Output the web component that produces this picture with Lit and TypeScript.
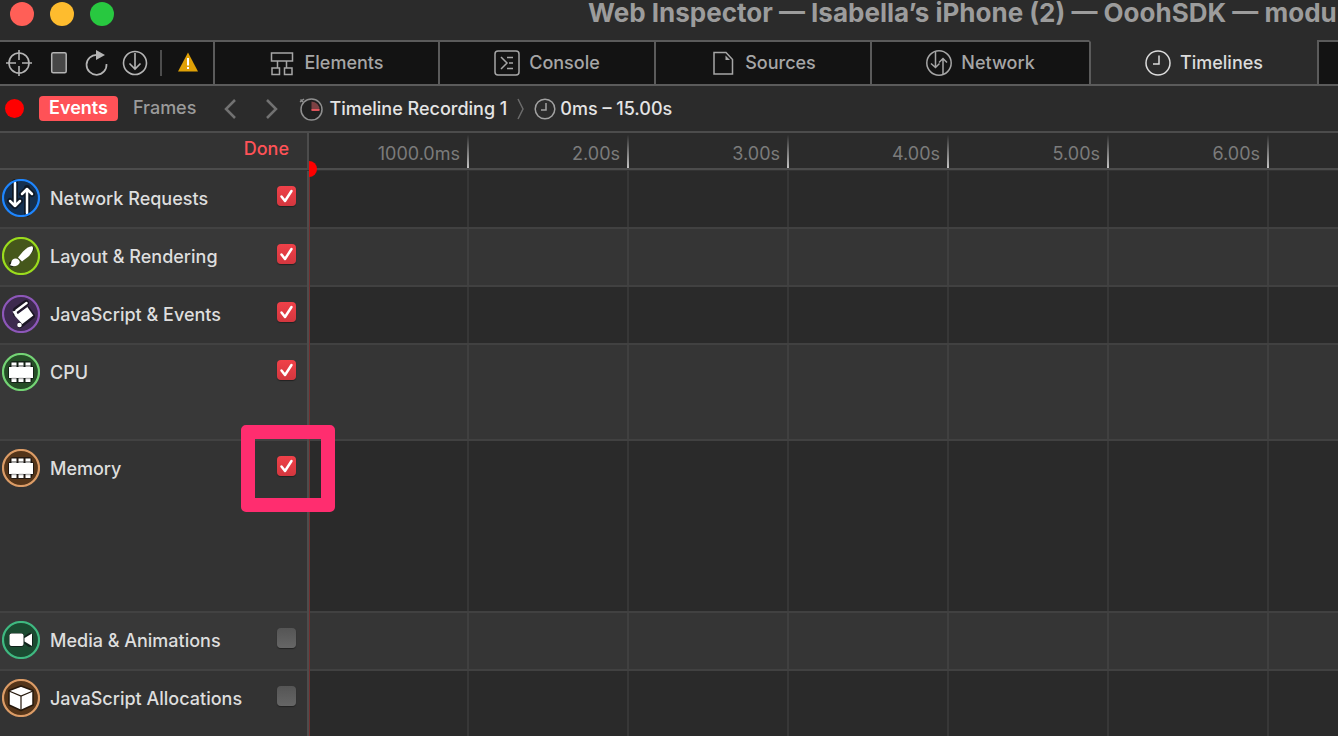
import { LitElement, html, svg, css, nothing } from "lit";
import { customElement, property, state } from "lit/decorators.js";
import { classMap } from "lit/directives/class-map.js";
import { styleMap } from "lit/directives/style-map.js";

type Row = { id: string; label: string; height: number; on: boolean; marked?: boolean };

const ROWS: Row[] = [
  { id: "network", label: "Network Requests", height: 58, on: true },
  { id: "layout", label: "Layout & Rendering", height: 58, on: true },
  { id: "script", label: "JavaScript & Events", height: 58, on: true },
  { id: "cpu", label: "CPU", height: 96, on: true },
  { id: "memory", label: "Memory", height: 172, on: true, marked: true },
  { id: "media", label: "Media & Animations", height: 58, on: false },
  { id: "heap", label: "JavaScript Allocations", height: 58, on: false },
];

const TABS = ["Elements", "Console", "Sources", "Network", "Timelines"];
const TICKS = ["1000.0ms", "2.00s", "3.00s", "4.00s", "5.00s", "6.00s"];

const tabIcons: Record<string, unknown> = {
  Elements: svg`<path d="M2.500 3h21v8h-21zM3 18h7.500v6.500H3zM15.500 18H23v6.500h-7.500zM8.500 11v7M17.500 11v7"/>`,
  Console: svg`<rect x="1" y="1" width="24" height="24" rx="3"/><path d="M7 7l6 6-6 6M13 7.500h6M15 13h4M13 18.500h6"/>`,
  Sources: svg`<path d="M4 2.500h12l6.500 7V24H4z"/><path d="M15.500 5.500V10H20z" fill="currentColor" stroke="none"/>`,
  Network: svg`<circle cx="13" cy="13" r="12.200"/><path d="M9.500 1.500V17M5 13.500l4.500 4 4-4M17 24.500V9M13 12.500l4-4 4 4"/>`,
  Timelines: svg`<circle cx="13" cy="13" r="12"/><path d="M14 5.500V14H8"/>`,
};

const chip = svg`
  <path class="halo" d="M11 11h16v16H11z"/>
  <rect class="halo" x="9" y="15.500" width="20" height="8"/>
  <g fill="#fff"><rect x="9.500" y="9.500" width="5" height="3"/><rect x="16.500" y="9.500" width="5" height="3"/><rect x="23.500" y="9.500" width="5" height="3"/>
  <rect x="9.500" y="26" width="5" height="3"/><rect x="16.500" y="26" width="5" height="3"/><rect x="23.500" y="26" width="5" height="3"/>
  <rect x="7" y="14" width="24" height="11"/></g>
  <path d="M9.500 13.200h5M16.500 13.200h5M23.500 13.200h5M9.500 25.500h5M16.500 25.500h5M23.500 25.500h5" stroke="#aaa" stroke-width="1.500"/>`;

const badges: Record<string, { ring: string; fill: string; art: unknown }> = {
  network: {
    ring: "#1e86ff", fill: "#153050",
    art: svg`<path class="halo" d="M13 3v24M8 22l5 5 5-5M25 35V9M20 15l5-5 5 5"/>
      <path class="line" d="M13 4v23M8 22l5 5 5-5M25 34V10M20 15l5-5 5 5"/>`,
  },
  layout: {
    ring: "#9bdc1d", fill: "#45571b",
    art: svg`<path class="halo" d="M29 12l-9 9M14 25l-4 2"/>
      <path fill="#fff" d="M30.500 9.500c-2.500-1-6 1.500-9.500 5l-5 6 4 4 6.500-5c4-4 5.300-8 4-10z"/>
      <path fill="#fff" d="M13.500 21.500c2.500 0 4.300 1.800 4.300 4-1 3.500-6.300 4.800-10.300 2.500 1.800-.5 1.500-1.800 1.800-3 .5-2 2-3.500 4.200-3.500z"/>`,
  },
  script: {
    ring: "#8d57b9", fill: "#3d2a4e",
    art: svg`<path class="halo" d="M14 15L24 8M14 19l11-5 5 7-9 7-3 2"/>
      <path fill="#fff" d="M12.500 20.500l12.500-9 6.300 9-11 8.500z"/>
      <path class="line" stroke-width="4" d="M14.500 15.500L24.500 8"/>
      <path fill="#fff" d="M10.500 16.500l4-1 1 6-2.500-1z"/>
      <circle cx="17.500" cy="30" r="2.300" fill="#fff"/>
      <path d="M15.500 18.500l9.500-7" stroke="#221530" stroke-width="1.200"/>`,
  },
  cpu: { ring: "#74d475", fill: "#264d27", art: chip },
  memory: { ring: "#dc9c66", fill: "#54351a", art: chip },
  media: {
    ring: "#3fb981", fill: "#1b4a31",
    art: svg`<path class="halo" d="M10 15h9v8H10zM24 18l4-3v8l-4-3z"/>
      <rect x="7.500" y="12.500" width="14" height="12.500" rx="2" fill="#fff"/><path fill="#fff" d="M22.500 17l7.500-4.500v12.500l-7.500-4.500z"/>`,
  },
  heap: {
    ring: "#dc9c66", fill: "#54351a",
    art: svg`<path d="M19 7l12 4.500V26l-12 5.500L7 26V11.500z" fill="#fff" stroke="#25180c" stroke-width="1.500" stroke-linejoin="round"/>
      <path d="M7 12l12 5 12-5M19 17v14" fill="none" stroke="#25180c" stroke-width="1.200"/>`,
  },
};

@customElement("timeline-badge")
class TimelineBadge extends LitElement {
  @property() kind = "network";

  static styles = css`
    :host { display: block; width: 38px; height: 38px; }
    svg { display: block; }
    .halo { fill: none; stroke: #0b0d0f; stroke-opacity: .65; stroke-width: 6; stroke-linecap: round; stroke-linejoin: round; }
    .line { fill: none; stroke: #fff; stroke-width: 2.500; stroke-linecap: round; stroke-linejoin: round; }
  `;

  render() {
    const b = badges[this.kind];
    return html`<svg width="38" height="38" viewBox="0 0 38 38" aria-hidden="true">
      <circle cx="19" cy="19" r="18" fill=${b.fill}></circle>
      ${b.art}
      <circle cx="19" cy="19" r="18" fill="none" stroke=${b.ring} stroke-width="2.200"></circle>
    </svg>`;
  }
}

@customElement("app-root")
class AppRoot extends LitElement {
  @state() rows = ROWS;
  @state() tab = "Timelines";

  static styles = css`
    :host {
      display: flex; flex-direction: column; height: 100vh; overflow: hidden;
      background: #2a2a2a; color: #dedede;
      font: 500 18px/24px Inter, "Liberation Sans", sans-serif;
    }
    * { box-sizing: border-box; }
    svg { display: block; flex: none; }
    button { font: inherit; color: inherit; background: none; border: 0; padding: 0; margin: 0; }

    .titlebar { display: flex; flex: none; height: 40px; padding: 2px 0 0 10px; gap: 16px; background: #2b2b2b; }
    .light { width: 24px; height: 24px; border-radius: 50%; flex: none; }
    .close { background: #ff5f57; }
    .min { background: #febc2e; }
    .max { background: #28c840; }
    .title { margin: 0 0 0 458px; font-size: 26px; line-height: 22px; font-weight: 700; color: #9c9c9c; white-space: nowrap; }

    .tabbar { display: flex; flex: none; height: 46px; background: #131313; }
    .tools { display: flex; align-items: center; width: 213px; flex: none; padding-left: 6px; color: #b4b4b4; border: solid #5b5b5b; border-width: 2px 0; }
    .tools button { display: block; }
    .reload, .target, .device, .import { margin-right: 12px; }
    .rule { width: 2px; height: 26px; background: #4d4d4d; margin-right: 16px; }
    .tabs { flex: 1; display: grid; grid-template-columns: 225fr 216fr 216fr 219fr 228fr 21fr; }
    .tab { display: flex; align-items: center; justify-content: center; gap: 9px; color: #a6a6a6; border: solid #5b5b5b; border-width: 2px 0 2px 2px; }
    .tab.active { background: #2b2b2b; color: #dcdcdc; border-top-color: #2b2b2b; }

    .nav { display: flex; align-items: center; flex: none; height: 47px; padding-left: 5px; background: #2b2b2b; border-bottom: 2px solid #4c4c4c; }
    .record { width: 19px; height: 19px; border-radius: 50%; background: #f00; margin-right: 15px; }
    .nav .events { height: 25px; padding: 0 10px 2px; border-radius: 4px; background: #ff5257; color: #fff; font-weight: 600; line-height: 23px; }
    .nav .frames { color: #9b9b9b; margin: 0 28px 0 15px; padding-bottom: 2px; line-height: 23px; }
    .nav .back { margin-right: 30px; }
    .nav .forward { margin-right: 21px; }
    .crumb { display: flex; align-items: center; gap: 6px; color: #e4e4e4; text-decoration: none; white-space: nowrap; }
    .crumb.range { gap: 4px; }
    .sep { margin: 0 9px 0 10px; }

    .head, .row { display: grid; grid-template-columns: 309px 1fr; flex: none; }
    .head { height: 37px; }
    .side-head { display: flex; justify-content: flex-end; padding: 4px 18px 0 0; background: #333; border: solid #4c4c4c; border-width: 0 2px 2px 0; }
    .side-head button { align-self: flex-start; color: #ff5257; }
    .ruler { display: flex; overflow: hidden; background: #2b2b2b; border-bottom: 2px solid #4c4c4c; }
    .tick { flex: 0 0 160px; padding: 9px 9px 0 0; text-align: right; color: #7b7b7b; font-weight: 400; background: linear-gradient(to bottom, #2b2b2b 5%, #c4c4c4) right / 2px 100% no-repeat; }

    .body { position: relative; flex: 1; display: flex; flex-direction: column; padding-top: 1px; background: #333; }
    .row:last-child { flex: 1; }
    .side { position: relative; display: grid; grid-template-columns: 38px 1fr 19px; column-gap: 10px; align-items: start; padding: 8px 11px 0 2px; background: #333; border: solid #4c4c4c; border-width: 0 2px 0 0; box-shadow: inset 0 -2px #424242; }
    .side label { padding-top: 8px; white-space: nowrap; }
    .graph {
      background: repeating-linear-gradient(to right, transparent 0 158px, #373737 158px 160px) #2a2a2a;
      border-left: 1px solid #6f3030; background-origin: border-box; box-shadow: inset 0 -2px #414141;
    }
    .row:nth-of-type(even) .side { background: #383838; }
    .row:nth-of-type(even) .graph { background-color: #353535; background-image: repeating-linear-gradient(to right, transparent 0 158px, #404040 158px 160px); }
    .row:last-child .side, .row:last-child .graph { box-shadow: none; }
    .check {
      appearance: none; width: 19px; height: 20px; margin: 7px 0 0; border-radius: 4px;
      background: linear-gradient(#555, #666); box-shadow: 0 1px 1px #222;
    }
    .check:checked { background: linear-gradient(#f04149, #d3373f); }
    .tickbox { position: relative; display: block; height: 27px; }
    .tickbox svg { position: absolute; left: 0; top: 7px; pointer-events: none; }
    .mark { position: absolute; z-index: 2; top: -16px; right: -28px; width: 94px; height: 87px; border: 14px solid #ff2d6f; border-radius: 5px; pointer-events: none; }
    .playhead { position: absolute; z-index: 1; left: 309px; top: -9px; width: 8px; height: 16px; border-radius: 0 8px 8px 0; background: #f00; }
  `;

  private toggle(id: string) {
    this.rows = this.rows.map((r) => (r.id === id ? { ...r, on: !r.on } : r));
  }

  private row(r: Row) {
    return html`<section class="row" style=${styleMap({ minHeight: `${r.height}px` })}>
      <div class="side">
        <timeline-badge kind=${r.id}></timeline-badge>
        <label for=${r.id}>${r.label}</label>
        <span class="tickbox">
          <input class="check" type="checkbox" id=${r.id} .checked=${r.on} @change=${() => this.toggle(r.id)} />
          ${r.on
            ? html`<svg width="19" height="20" viewBox="0 0 19 20" fill="none" stroke="#fff" stroke-width="2.500" stroke-linecap="round" stroke-linejoin="round" aria-hidden="true"><path d="M4.500 10.500l3.500 4.500 6.500-10"/></svg>`
            : nothing}
        </span>
        ${r.marked ? html`<div class="mark"></div>` : nothing}
      </div>
      <div class="graph"></div>
    </section>`;
  }

  render() {
    return html`
      <header class="titlebar">
        <span class="light close"></span><span class="light min"></span><span class="light max"></span>
        <h1 class="title">Web Inspector — Isabella’s iPhone (2) — OoohSDK — modu</h1>
      </header>
      <div class="tabbar">
        <div class="tools">
          <button class="target" aria-label="Select element"><svg width="26" height="26" viewBox="0 0 26 26" fill="none" stroke="currentColor" stroke-width="1.600"><circle cx="13" cy="13" r="10"/><path d="M13 0v10M13 16v10M0 13h10M16 13h10"/></svg></button>
          <button class="device" aria-label="Device settings"><svg width="28" height="26" viewBox="0 0 28 26"><rect x="7.700" y="2.700" width="14.500" height="20" rx="1.500" fill="#474747" stroke="currentColor" stroke-width="1.500"/></svg></button>
          <button class="reload" aria-label="Reload"><svg width="26" height="26" viewBox="0 0 26 26"><path d="M13 4.800A10 10 0 1 0 22.500 14" fill="none" stroke="currentColor" stroke-width="1.700"/><path d="M12 0l9 5-9 5z" fill="currentColor"/></svg></button>
          <button class="import" aria-label="Download"><svg width="26" height="26" viewBox="0 0 26 26" fill="none" stroke="currentColor" stroke-width="1.600"><circle cx="13" cy="13" r="11.500"/><path d="M13 3v15.500M7.500 13.500l5.500 5.500 5.500-5.500"/></svg></button>
          <span class="rule"></span>
          <button aria-label="Warnings"><svg width="20" height="26" viewBox="0 0 20 26"><path d="M10 2.500L20 21.500H0z" fill="#e0a106"/><path d="M10 8v7.500M10 17v2" stroke="#fff" stroke-width="2"/></svg></button>
        </div>
        <nav class="tabs">
          ${TABS.map(
            (t) => html`<button class=${classMap({ tab: true, active: t === this.tab })} @click=${() => (this.tab = t)}>
              <svg width="26" height="26" viewBox="0 0 26 26" fill="none" stroke="currentColor" stroke-width="1.500" aria-hidden="true">${tabIcons[t]}</svg>${t}
            </button>`
          )}
          <button class="tab" aria-label="More tabs"></button>
        </nav>
      </div>
      <div class="nav">
        <button class="record" aria-label="Record"></button>
        <button class="events">Events</button>
        <button class="frames">Frames</button>
        <button class="back" aria-label="Back"><svg width="12" height="20" viewBox="0 0 12 20" fill="none" stroke="#727272" stroke-width="2.500"><path d="M11 1L2 10l9 9"/></svg></button>
        <button class="forward" aria-label="Forward"><svg width="12" height="20" viewBox="0 0 12 20" fill="none" stroke="#727272" stroke-width="2.500"><path d="M1 1l9 9-9 9"/></svg></button>
        <a class="crumb" href="#recording">
          <svg width="24" height="24" viewBox="0 0 24 24" fill="none"><circle cx="12.500" cy="12.500" r="10.500" fill="#202020" stroke="#8f8f8f" stroke-width="1.500"/><path d="M12.500 4.500a8 8 0 0 1 8 8.500h-8z" fill="#7c4143"/><path d="M12.500 13h8" stroke="#f05a60" stroke-width="1.800"/><path d="M1 5l4-3M1.500 2.500L4 5" stroke="#8f8f8f" stroke-width="1.500"/></svg>
          Timeline Recording 1
        </a>
        <svg class="sep" width="8" height="22" viewBox="0 0 8 22" fill="none" stroke="#6c6c6c" stroke-width="1.500"><path d="M1 1l5 10-5 10"/></svg>
        <a class="crumb range" href="#range">
          <svg width="22" height="22" viewBox="0 0 22 22" fill="none" stroke="#a2a2a2" stroke-width="1.500"><circle cx="11" cy="11" r="9.800"/><path d="M12 5v7H7"/></svg>
          0ms – 15.00s
        </a>
      </div>
      <div class="head">
        <div class="side-head"><button>Done</button></div>
        <div class="ruler">${TICKS.map((t) => html`<div class="tick">${t}</div>`)}</div>
      </div>
      <main class="body">
        <div class="playhead"></div>
        ${this.rows.map((r) => this.row(r))}
      </main>
    `;
  }
}
